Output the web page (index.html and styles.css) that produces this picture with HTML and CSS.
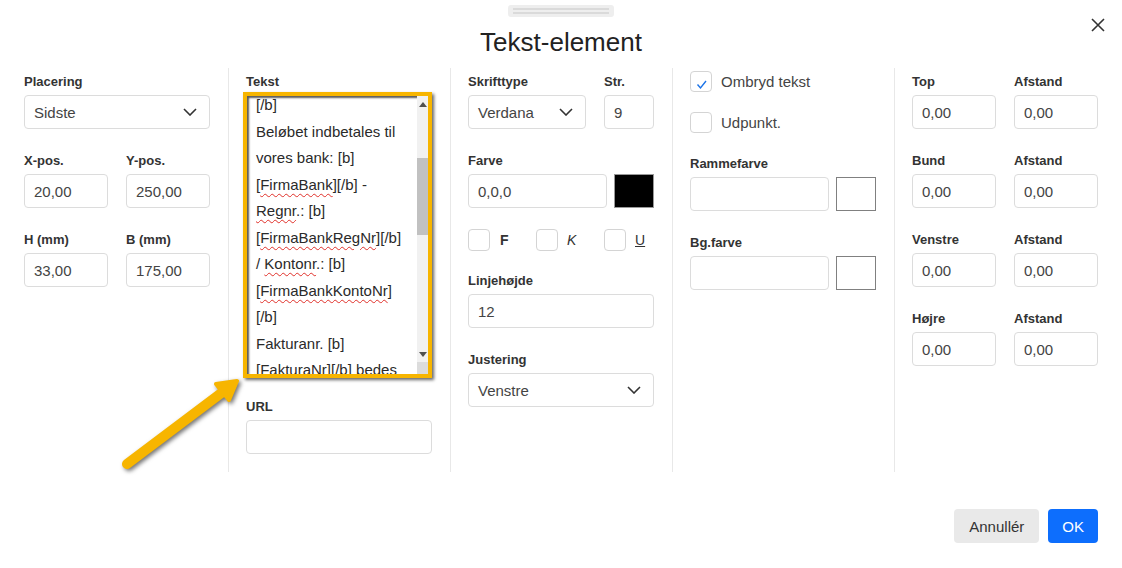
FILE: index.html
```html
<!doctype html>
<html lang="da">
<head>
    <meta charset="UTF-8">
    <title>Tekst-element</title>
    <link rel="stylesheet" href="styles.css">
</head>
<body>
<div class="dialog">
    <div class="handle"><span></span><span></span></div>
    <h1 class="title">Tekst-element</h1>
    <button class="close" type="button">
        <svg width="14" height="14" viewBox="0 0 14 14"><path d="M1 1L13 13M13 1L1 13" stroke="#333" stroke-width="1.6" fill="none"/></svg>
    </button>

    <div class="columns">
        <!-- placering -->
        <div class="col">
            <div class="field">
                <label class="label">Placering</label>
                <div class="select"><span>Sidste</span><svg width="14" height="8" viewBox="0 0 14 8"><path d="M1 1l6 6 6-6" stroke="#333" stroke-width="1.6" fill="none"/></svg></div>
            </div>
            <div class="pair">
                <div class="field">
                    <label class="label">X-pos.</label>
                    <input class="input" type="text" value="20,00">
                </div>
                <div class="field">
                    <label class="label">Y-pos.</label>
                    <input class="input" type="text" value="250,00">
                </div>
            </div>
            <div class="pair">
                <div class="field">
                    <label class="label">H (mm)</label>
                    <input class="input" type="text" value="33,00">
                </div>
                <div class="field">
                    <label class="label">B (mm)</label>
                    <input class="input" type="text" value="175,00">
                </div>
            </div>
        </div>

        <!-- tekst -->
        <div class="col">
            <label class="label">Tekst</label>
            <div class="memo">
                <div class="memo-text">
                    <div>[/b]</div>
                    <div>Beløbet indbetales til</div>
                    <div>vores bank: [b]</div>
                    <div>[<u>FirmaBank</u>][/b] -</div>
                    <div><u>Regnr</u>.: [b]</div>
                    <div>[<u>FirmaBankRegNr</u>][/b]</div>
                    <div>/ <u>Kontonr</u>.: [b]</div>
                    <div>[<u>FirmaBankKontoNr</u>]</div>
                    <div>[/b]</div>
                    <div>Fakturanr. [b]</div>
                    <div>[<u>FakturaNr</u>][/b] bedes</div>
                </div>
                <div class="scrollbar">
                    <div class="sb-btn"><i class="up"></i></div>
                    <div class="sb-track"><div class="sb-thumb"></div></div>
                    <div class="sb-btn"><i class="down"></i></div>
                    <div class="sb-corner"></div>
                </div>
            </div>
            <div class="field url">
                <label class="label">URL</label>
                <input class="input" type="text" value="">
            </div>
        </div>

        <!-- skrift -->
        <div class="col">
            <div class="pair font">
                <div class="field">
                    <label class="label">Skrifttype</label>
                    <div class="select"><span>Verdana</span><svg width="14" height="8" viewBox="0 0 14 8"><path d="M1 1l6 6 6-6" stroke="#333" stroke-width="1.6" fill="none"/></svg></div>
                </div>
                <div class="field">
                    <label class="label">Str.</label>
                    <input class="input" type="text" value="9">
                </div>
            </div>
            <div class="field">
                <label class="label">Farve</label>
                <div class="color-row">
                    <input class="input" type="text" value="0,0,0">
                    <div class="swatch black"></div>
                </div>
            </div>
            <div class="style-row">
                <div class="style-item"><span class="box"></span><b>F</b></div>
                <div class="style-item"><span class="box"></span><i>K</i></div>
                <div class="style-item"><span class="box"></span><span class="ul">U</span></div>
            </div>
            <div class="field">
                <label class="label">Linjehøjde</label>
                <input class="input" type="text" value="12">
            </div>
            <div class="field">
                <label class="label">Justering</label>
                <div class="select"><span>Venstre</span><svg width="14" height="8" viewBox="0 0 14 8"><path d="M1 1l6 6 6-6" stroke="#333" stroke-width="1.6" fill="none"/></svg></div>
            </div>
        </div>

        <!-- ramme -->
        <div class="col">
            <div class="check">
                <span class="box"><svg width="20" height="20" viewBox="0 0 20 20"><path d="M6.5 12.5l3 3.5L15 9" stroke="#1a73e8" stroke-width="1.4" fill="none"/></svg></span>
                Ombryd tekst
            </div>
            <div class="check">
                <span class="box"></span>
                Udpunkt.
            </div>
            <div class="field">
                <label class="label">Rammefarve</label>
                <div class="color-row">
                    <input class="input" type="text" value="">
                    <div class="swatch"></div>
                </div>
            </div>
            <div class="field">
                <label class="label">Bg.farve</label>
                <div class="color-row">
                    <input class="input" type="text" value="">
                    <div class="swatch"></div>
                </div>
            </div>
        </div>

        <!-- afstand -->
        <div class="col">
            <div class="pair">
                <div class="field"><label class="label">Top</label><input class="input" type="text" value="0,00"></div>
                <div class="field"><label class="label">Afstand</label><input class="input" type="text" value="0,00"></div>
            </div>
            <div class="pair">
                <div class="field"><label class="label">Bund</label><input class="input" type="text" value="0,00"></div>
                <div class="field"><label class="label">Afstand</label><input class="input" type="text" value="0,00"></div>
            </div>
            <div class="pair">
                <div class="field"><label class="label">Venstre</label><input class="input" type="text" value="0,00"></div>
                <div class="field"><label class="label">Afstand</label><input class="input" type="text" value="0,00"></div>
            </div>
            <div class="pair">
                <div class="field"><label class="label">Højre</label><input class="input" type="text" value="0,00"></div>
                <div class="field"><label class="label">Afstand</label><input class="input" type="text" value="0,00"></div>
            </div>
        </div>
    </div>

    <div class="footer">
        <button class="btn" type="button">Annullér</button>
        <button class="btn primary" type="button">OK</button>
    </div>

    <!-- pil (markering) -->
    <svg class="arrow" width="1122" height="568" viewBox="0 0 1122 568">
        <line x1="127" y1="464" x2="224" y2="391" stroke="#f7b500" stroke-width="10" stroke-linecap="round"/>
        <polygon points="237,381 216,384 229,400" fill="#f7b500" stroke="#f7b500" stroke-width="4" stroke-linejoin="round"/>
    </svg>
</div>
</body>
</html>
```

FILE: styles.css
```css
*{
    box-sizing: border-box;
}
body{
    margin:0;
    background-color: #fff;
    font-family: "Liberation Sans", Arial, sans-serif;
    color:#333;
}

.dialog{
    position: relative;
    width:1122px;
    height:568px;
    overflow: hidden;
}

.handle{
    width:106px;
    height:12px;
    margin:5px auto 0;
    padding:3px 5px;
    background-color: #eee;
    border-radius:3px;
    display: flex;
    flex-direction: column;
    gap:2px;
}
.handle span{
    height:2px;
    background-color: #dadada;
}

.title{
    margin:10px 0 0;
    text-align: center;
    font-weight: normal;
    font-size:26px;
    line-height:30px;
    color:#222;
}

.close{
    position: absolute;
    top:18px;
    right:17px;
    width:14px;
    height:14px;
    padding:0;
    border:0;
    background: none;
    display: flex;
}

.columns{
    display: grid;
    grid-template-columns: repeat(5, 222px);
    padding:0 6px;
    margin-top:11px;
}
.col{
    height:404px;
    padding:3px 18px 0;
}
.col + .col{
    border-left:1px solid #e8e8e8;
    padding-left:17px;
}

.field{
    margin-bottom:21px;
}
.label{
    display: block;
    font-size:13px;
    font-weight: bold;
    line-height:20px;
    padding-top:1px;
    margin-bottom:3px;
    color:#333;
}
.input,
.select{
    display: block;
    width:100%;
    height:34px;
    border:1px solid #dcdcdc;
    border-radius:4px;
    padding:0 9px;
    font-family: "Liberation Sans", Arial, sans-serif;
    font-size:15px;
    color:#444;
    background-color: #fff;
    outline: none;
}
.select{
    display: flex;
    align-items: center;
    justify-content: space-between;
    padding-right:12px;
}

.pair{
    display: grid;
    grid-template-columns: 84px 84px;
    column-gap:18px;
}
.pair.font{
    grid-template-columns: 118px 50px;
}

.color-row{
    display: flex;
    gap:7px;
}
.color-row .input{
    width:139px;
}
.swatch{
    width:40px;
    height:34px;
    border:1px solid #808080;
    background-color: #fff;
}
.swatch.black{
    background-color: #000;
    border-color:#999;
}

.box{
    display: inline-flex;
    width:22px;
    height:22px;
    border:1px solid #d4d4d4;
    border-radius:4px;
    background-color: #fff;
    flex-shrink: 0;
}

.style-row{
    display: grid;
    grid-template-columns: 68px 68px auto;
    margin-bottom:19px;
}
.style-item{
    display: flex;
    align-items: center;
    gap:9px;
    font-size:14px;
    color:#333;
}
.style-item b{
    padding-left:1px;
}
.style-item .ul{
    text-decoration: underline;
}

.check{
    display: flex;
    align-items: center;
    gap:9px;
    height:21px;
    margin-bottom:20px;
    font-size:15px;
    color:#444;
}
.check .box{
    height:21px;
}
.check + .field{
    margin-top:0;
}

/* tekstfelt med markering */
.memo{
    display: flex;
    height:286px;
    margin-top:-3px;
    margin-left:-3px;
    border:4px solid #f7b500;
    background-color: #fff;
    box-shadow: 2px 2px 3px rgba(0,0,0,.6), inset 2px 2px 2px rgba(0,0,0,.65);
}
.memo-text{
    flex:1;
    overflow: hidden;
    padding:0 0 0 9px;
    margin-top:-4px;
    font-size:15px;
    line-height:26.5px;
    color:#2a2a2a;
    white-space: nowrap;
}
.memo-text u{
    text-decoration: underline wavy #e0302a;
    text-decoration-thickness:1px;
    text-underline-offset:3px;
}

.scrollbar{
    width:11px;
    display: flex;
    flex-direction: column;
    background-color: #f1f1f1;
}
.sb-btn{
    height:16px;
    display: flex;
    align-items: center;
    justify-content: center;
}
.sb-btn i{
    width:0;
    height:0;
    border-left:4px solid transparent;
    border-right:4px solid transparent;
}
.sb-btn i.up{
    border-bottom:5px solid #505050;
}
.sb-btn i.down{
    border-top:5px solid #505050;
}
.sb-track{
    flex:1;
}
.sb-thumb{
    margin-top:46px;
    height:77px;
    background-color: #c1c1c1;
}
.sb-corner{
    height:12px;
    background-color: #dcdcdc;
}

.url{
    margin-top:18px;
}

.footer{
    display: flex;
    justify-content: flex-end;
    gap:9px;
    padding-right:24px;
    margin-top:37px;
}
.btn{
    height:34px;
    padding:0 15px;
    border:0;
    border-radius:4px;
    background-color: #e9e9e9;
    color:#333;
    font-family: "Liberation Sans", Arial, sans-serif;
    font-size:15px;
}
.btn.primary{
    background-color: #0d6efd;
    color:#fff;
    padding:0 14px;
}

.arrow{
    position: absolute;
    left:0;
    top:0;
    pointer-events: none;
    filter: drop-shadow(2px 2px 2px rgba(0,0,0,.55));
}
```
